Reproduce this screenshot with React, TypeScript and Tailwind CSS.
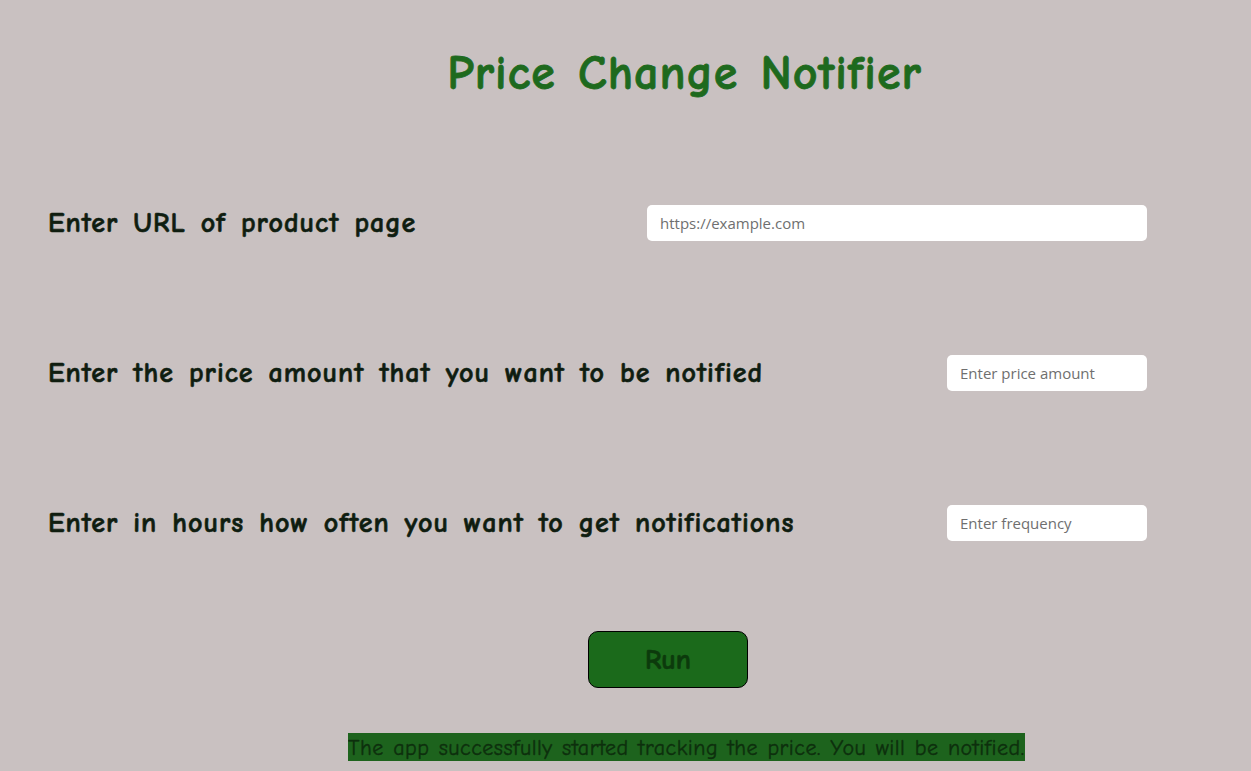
const comic = "font-['Comic_Sans_MS','Comic_Neue',Lato,sans-serif]";
const labelCls = `${comic} text-[28px] font-bold text-[#0f1d10] tracking-[1px] [word-spacing:4px] [-webkit-text-stroke:0.6px_currentColor]`;
const inputCls =
  "h-[36px] bg-white rounded-[5px] px-[13px] text-[15px] font-['Open_Sans',sans-serif] placeholder:text-[#6f6f6f] outline-none";

export default function App() {
  return (
    <div className="min-h-[771px] w-full bg-[#c9c1c1] flex flex-col">
      {/* Title */}
      <h1
        className={`${comic} mt-[46px] h-[56px] leading-[56px] text-center pl-[118px] text-[48px] font-bold text-[#1e6a1e] tracking-[1px] [word-spacing:4px] [-webkit-text-stroke:0.8px_currentColor]`}
      >
        Price Change Notifier
      </h1>

      {/* Form rows */}
      <div className="mt-[103px] flex flex-col gap-[114px] pl-[48px] pr-[104px]">
        <div className="flex items-center justify-between h-[36px]">
          <label className={labelCls}>Enter URL of product page</label>
          <input type="text" placeholder="https://example.com" className={`w-[500px] ${inputCls}`} />
        </div>
        <div className="flex items-center justify-between h-[36px]">
          <label className={labelCls}>Enter the price amount that you want to be notified</label>
          <input type="text" placeholder="Enter price amount" className={`w-[200px] ${inputCls}`} />
        </div>
        <div className="flex items-center justify-between h-[36px]">
          <label className={labelCls}>Enter in hours how often you want to get notifications</label>
          <input type="text" placeholder="Enter frequency" className={`w-[200px] ${inputCls}`} />
        </div>
      </div>

      {/* Run button */}
      <div className="mt-[90px] flex pl-[588px]">
        <button
          className={`${comic} w-[160px] h-[57px] rounded-[10px] border border-black bg-[#1b6a1b] text-[28px] font-bold text-[#0c3a0c] [-webkit-text-stroke:0.6px_currentColor]`}
        >
          Run
        </button>
      </div>

      {/* Status message */}
      <div className="mt-[45px] flex pl-[348px]">
        <p
          className={`${comic} w-[677px] h-[28px] leading-[30px] bg-[#1d631d] text-[22px] text-[#0d2f0d] tracking-[0.5px] [word-spacing:1.5px] [-webkit-text-stroke:0.4px_currentColor] whitespace-nowrap overflow-hidden`}
        >
          The app successfully started tracking the price. You will be notified.
        </p>
      </div>
    </div>
  );
}
